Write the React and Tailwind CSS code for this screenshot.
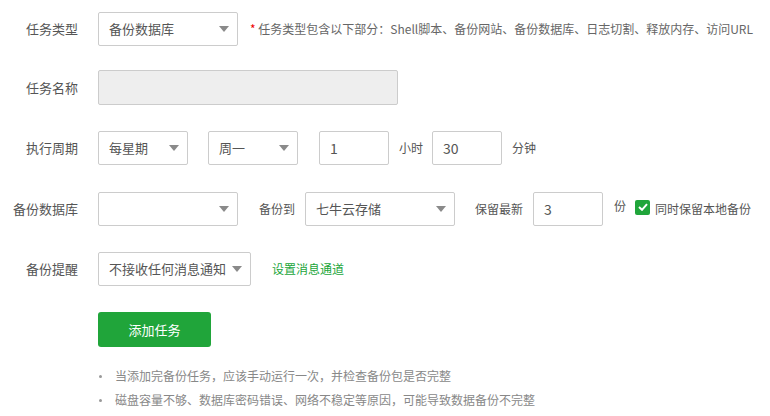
import React from "react";

const font = { fontFamily: '"Noto Sans CJK SC", "Noto Sans", sans-serif' };

function Arrow() {
  return (
    <svg width="10" height="6" viewBox="0 0 10 6" className="shrink-0">
      <path d="M0 0 L10 0 L5 6 Z" fill="#8a8a8a" />
    </svg>
  );
}

function Select({ w, value }) {
  return (
    <div
      className={`${w} h-[34px] border border-[#ccc] rounded-[2px] bg-white flex items-center justify-between pl-[10px] pr-[8px] text-[13px] text-[#555] shrink-0`}
    >
      <span className="whitespace-nowrap">{value}</span>
      <Arrow />
    </div>
  );
}

function Input({ w, value }) {
  return (
    <div
      className={`${w} h-[34px] border border-[#ccc] rounded-[2px] bg-white flex items-center pl-[10px] text-[14px] text-[#555] shrink-0`}
    >
      {value}
    </div>
  );
}

function Label({ children }) {
  return (
    <div className="w-[98px] pr-[20px] text-right text-[13px] text-[#555] shrink-0 whitespace-nowrap">
      {children}
    </div>
  );
}

export default function App() {
  return (
    <div className="w-[770px] h-[416px] bg-white pt-[12px]" style={font}>
      <div className="flex items-center h-[34px]">
        <Label>任务类型</Label>
        <Select w="w-[140px]" value="备份数据库" />
        <div className="ml-[12px] text-[12px] text-[#666] whitespace-nowrap">
          <span className="text-[#e00]">*</span> 任务类型包含以下部分：Shell脚本、备份网站、备份数据库、日志切割、释放内存、访问URL
        </div>
      </div>

      <div className="flex items-center h-[35px] mt-[24px]">
        <Label>任务名称</Label>
        <div className="w-[300px] h-[35px] border border-[#ccc] rounded-[2px] bg-[#eee]" />
      </div>

      <div className="flex items-center h-[34px] mt-[26px]">
        <Label>执行周期</Label>
        <Select w="w-[90px]" value="每星期" />
        <div className="ml-[20px]">
          <Select w="w-[90px]" value="周一" />
        </div>
        <div className="ml-[21px]">
          <Input w="w-[70px]" value="1" />
        </div>
        <span className="ml-[10px] text-[12px] text-[#555]">小时</span>
        <div className="ml-[9px]">
          <Input w="w-[70px]" value="30" />
        </div>
        <span className="ml-[10px] text-[12px] text-[#555]">分钟</span>
      </div>

      <div className="flex items-center h-[34px] mt-[27px]">
        <Label>备份数据库</Label>
        <Select w="w-[140px]" value="" />
        <span className="ml-[21px] text-[12px] text-[#555] whitespace-nowrap">备份到</span>
        <div className="ml-[10px]">
          <Select w="w-[150px]" value="七牛云存储" />
        </div>
        <span className="ml-[20px] text-[12px] text-[#555] whitespace-nowrap">保留最新</span>
        <div className="ml-[10px]">
          <Input w="w-[70px]" value="3" />
        </div>
        <span className="ml-[11px] text-[12px] text-[#555] -mt-[6px]">份</span>
        <div className="ml-[9px] w-[15px] h-[15px] rounded-[2px] bg-[#20a53a] flex items-center justify-center -mt-[4px]">
          <svg width="10" height="8" viewBox="0 0 10 8">
            <path d="M1 4 L4 6.8 L9 1.2" stroke="white" strokeWidth="2" fill="none" />
          </svg>
        </div>
        <span className="ml-[5px] text-[12px] text-[#555] whitespace-nowrap">同时保留本地备份</span>
      </div>

      <div className="flex items-center h-[34px] mt-[26px]">
        <Label>备份提醒</Label>
        <Select w="w-[153px]" value="不接收任何消息通知" />
        <span className="ml-[21px] text-[12px] text-[#20a53a] whitespace-nowrap">设置消息通道</span>
      </div>

      <div className="flex mt-[26px] pl-[98px]">
        <button className="w-[113px] h-[35px] rounded-[3px] bg-[#20a53a] text-white text-[13px]">
          添加任务
        </button>
      </div>

      <ul className="mt-[17px] pl-[99px] text-[12px] text-[#888]">
        <li className="flex items-center h-[24px]">
          <span className="w-[3px] h-[3px] rounded-full bg-[#999] mr-[13px]" />
          当添加完备份任务，应该手动运行一次，并检查备份包是否完整
        </li>
        <li className="flex items-center h-[24px]">
          <span className="w-[3px] h-[3px] rounded-full bg-[#999] mr-[13px]" />
          磁盘容量不够、数据库密码错误、网络不稳定等原因，可能导致数据备份不完整
        </li>
      </ul>
    </div>
  );
}
